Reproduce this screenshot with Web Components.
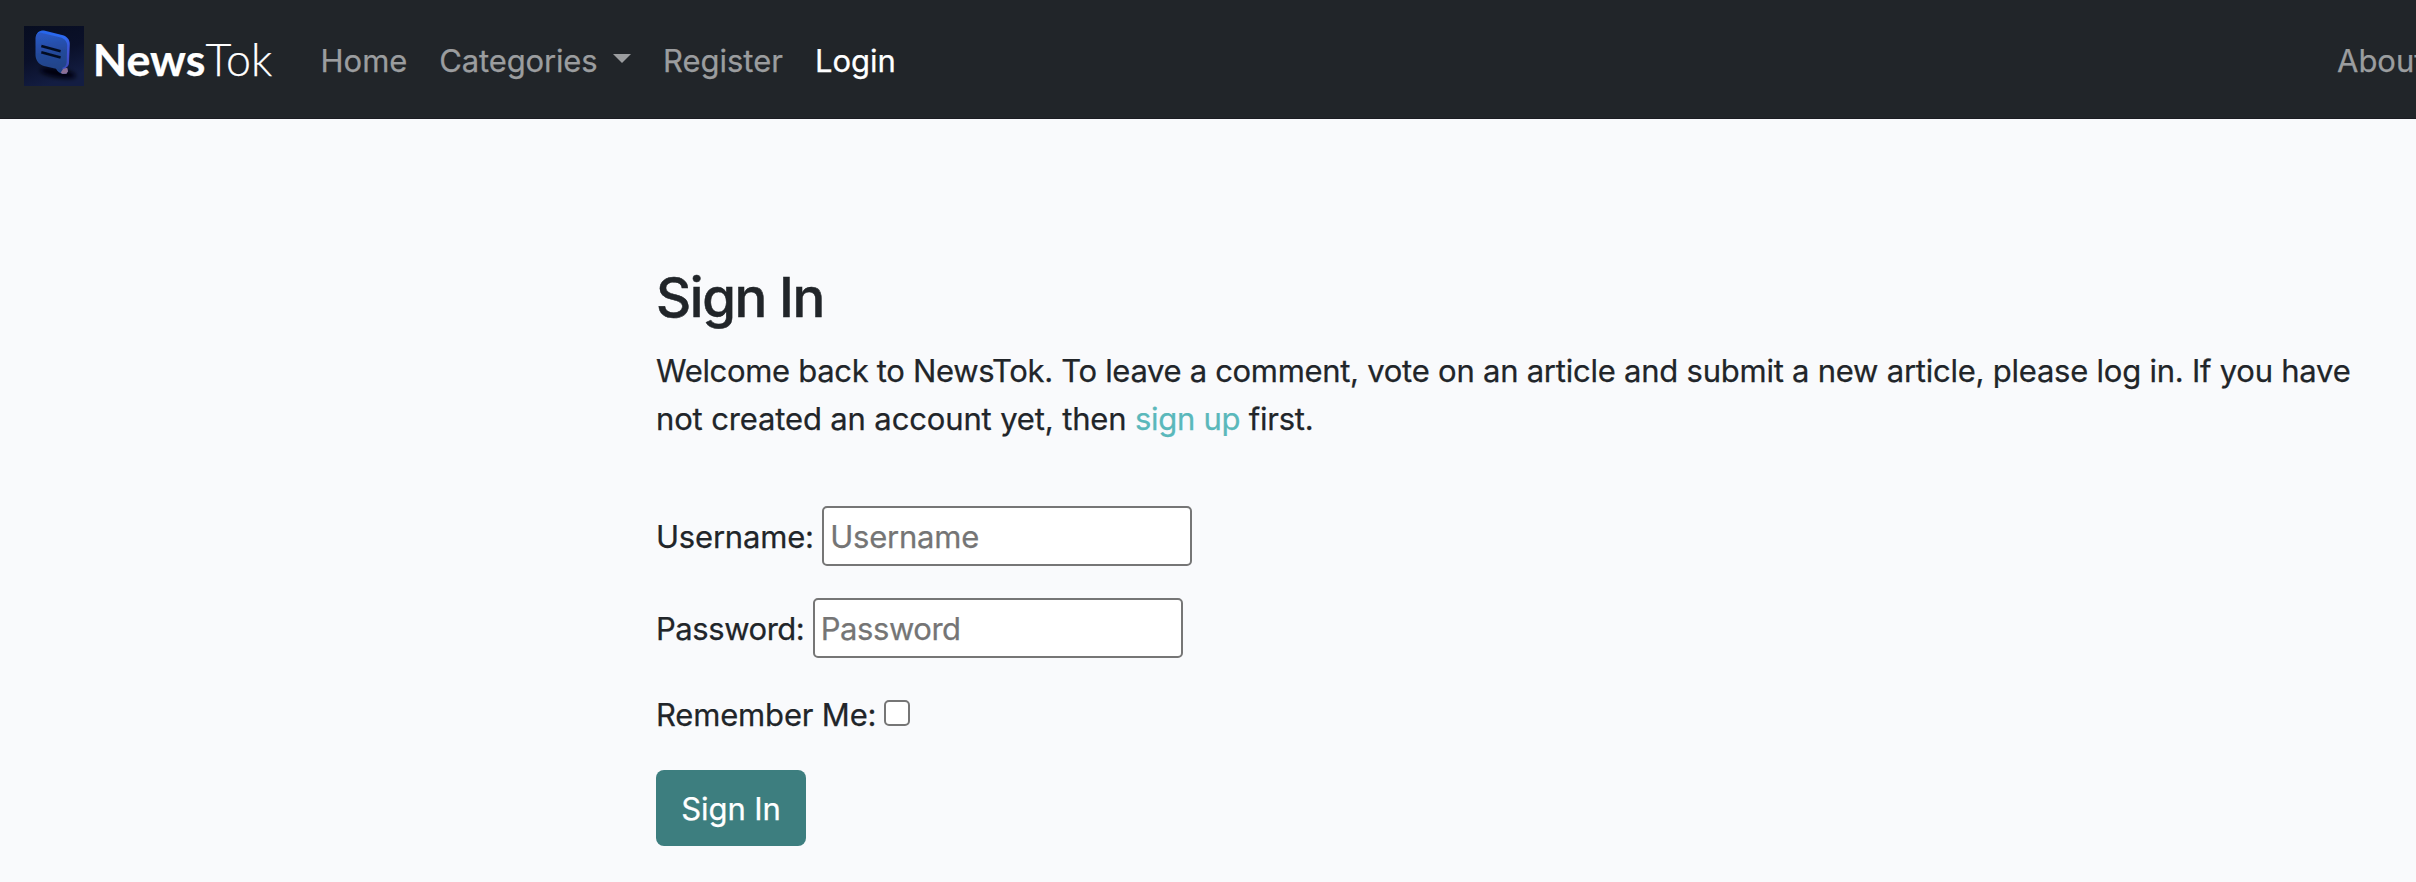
<!DOCTYPE html>
<html lang="en">
<head>
<meta charset="utf-8">
<title>NewsTok - Sign In</title>
<style>
html,body{margin:0;padding:0}
body{background:#f9fafc;color:#212529;font:400 31px/48px Inter,"Liberation Sans",sans-serif;-webkit-text-stroke:.25px;overflow:hidden;height:882px}
</style>
</head>
<body>
<nt-app></nt-app>
<script>
const define=(name,html,setup)=>{
  const tpl=document.createElement('template');
  tpl.innerHTML=html;
  customElements.define(name,class extends HTMLElement{
    constructor(){super();this.attachShadow({mode:'open'}).append(tpl.content.cloneNode(true));}
    connectedCallback(){if(setup)setup(this,this.shadowRoot);}
  });
};

define('nt-logo',`<style>:host{display:block;width:60px;height:60px;flex:none}svg{display:block}</style>
<svg width="60" height="60" viewBox="0 0 60 60">
<defs>
<linearGradient id="bg" x1="0" y1="0" x2=".35" y2="1"><stop offset="0" stop-color="#070d20"/><stop offset=".55" stop-color="#0a1029"/><stop offset="1" stop-color="#131d42"/></linearGradient>
<linearGradient id="face" x1=".4" y1="0" x2=".5" y2="1"><stop offset="0" stop-color="#2a58c4"/><stop offset=".5" stop-color="#24499a"/><stop offset="1" stop-color="#1f4283"/></linearGradient>
<linearGradient id="side" x1="0" y1="0" x2="1" y2=".9"><stop offset="0" stop-color="#2464ea"/><stop offset=".55" stop-color="#2e6af2"/><stop offset=".8" stop-color="#4150d0"/><stop offset="1" stop-color="#3446aa"/></linearGradient>
<filter id="soft" x="-50%" y="-50%" width="200%" height="200%"><feGaussianBlur stdDeviation="2.2"/></filter>
<filter id="edge"><feGaussianBlur stdDeviation=".35"/></filter>
</defs>
<rect width="60" height="60" fill="url(#bg)"/>
<ellipse cx="34" cy="47" rx="18" ry="4.5" transform="rotate(10 34 47)" fill="#03050f" filter="url(#soft)"/>
<g filter="url(#edge)">
<path d="M12 12C12 7 15 4.5 20 4.6L39 9.3C43 10.6 45.8 13.5 45.8 18L45 37C44.8 39.5 43.5 41 42 41.6L43.8 44L42.8 47.6L38.5 48Z" fill="url(#side)"/>
<path d="M11.5 13C11.5 8.5 14 6.3 18 7L36 11.3C40.5 12.5 43.2 15.5 43.2 19.5L42.7 36C42.6 39 41 41.5 38 42L41.5 45.5L38.5 47.8C36 47.5 33.5 45.5 32 42.8L20 40C14.5 38.5 11.6 34 11.5 29Z" fill="url(#face)"/>
<path d="M39 43L43.3 41.8L44 45.6L42.3 47.8L38 47.8L36.8 46.4Z" fill="#8c6f94"/>
<path d="M17.3 20L36.6 25.3M17.3 26.3L36.6 31.6" stroke="#060c24" stroke-width="2.6"/>
</g>
</svg>`);

define('nt-brand',`<style>:host{display:flex;align-items:center;gap:8.65px;width:296.5px;flex:none;color:#fff;font:300 44.8px/54px Lato,sans-serif}
nt-logo{margin-top:-6px}b{font-weight:700}.t{letter-spacing:.1px}</style>
<nt-logo></nt-logo><span><b>News</b><span class="t">Tok</span></span>`);

define('nt-link',`<style>:host{display:flex;align-items:center;color:#9b9d9f;padding-top:3px;white-space:nowrap}
:host([active]){color:#fff}
i{display:none}
:host([dropdown]) i{display:block;border:9px solid transparent;border-top-color:currentColor;border-bottom:0;margin:-5px 0 0 15.5px}</style>
<slot></slot><i></i>`);

define('nt-navbar',`<style>:host{display:flex;align-items:center;height:118px;box-sizing:content-box;border-bottom:1px solid #1b1c22;background:#212529;padding-left:24px;overflow:hidden}
nav{display:flex;gap:32px;flex:1}
.end{flex:none;width:79px}</style>
<nt-brand></nt-brand>
<nav><nt-link>Home</nt-link><nt-link dropdown style="letter-spacing:-.16px">Categories</nt-link><nt-link>Register</nt-link><nt-link active>Login</nt-link></nav>
<nt-link class="end">About</nt-link>`);

define('nt-field',`<style>:host{display:flex;align-items:center;height:60px}
label{padding-top:1px}
input{box-sizing:border-box;width:370px;height:60px;margin:0 0 0 8.4px;padding:1px 6px;border:2px solid #767676;border-radius:5px;background:#fff;font:inherit;letter-spacing:inherit;outline:0}
input::placeholder{color:#757575;opacity:1}</style>
<label><slot></slot></label><input>`,(host,root)=>{
  const input=root.querySelector('input');
  input.placeholder=host.getAttribute('placeholder')||'';
  input.type=host.getAttribute('type')||'text';
});

define('nt-check',`<style>:host{display:flex;align-items:center;height:48px;letter-spacing:-.17px}
label{padding-top:3px}
input{appearance:none;box-sizing:border-box;width:26px;height:26px;margin:-1px 0 0 8px;border:2px solid #767676;border-radius:5px;background:#fff}</style>
<label><slot></slot></label><input type="checkbox">`);

define('nt-button',`<style>:host{display:block}
button{display:block;width:150px;height:76px;margin:0;padding:1px 0 0;border:0;border-radius:8px;background:#3d7e7f;color:#fff;font:inherit;letter-spacing:-.08px;-webkit-text-stroke:.25px}</style>
<button><slot></slot></button>`);

define('nt-signin',`<style>:host{display:block;padding:144px 0 0 656px}
h1{margin:0 0 16px;font-weight:500;font-size:54.5px;line-height:68px;letter-spacing:-1.4px;-webkit-text-stroke:.5px}
p{margin:0 0 63px;white-space:nowrap}
.l1{letter-spacing:-.32px}.l1b{letter-spacing:-.235px}.l2{letter-spacing:-.14px}
a{color:#5ab8bb;text-decoration:none;letter-spacing:-.28px}
.f{letter-spacing:-.25px}
nt-field{margin-bottom:32px}
nt-check{margin:-1px 0 33px}</style>
<h1>Sign In</h1>
<p><span class="l1">Welcome back to NewsTok. To leave a comment,</span><span class="l1b"> vote on an article and submit a new article, please log in. If you have</span><br><span class="l2">not created an account yet, then </span><a>sign up</a><span class="f"> first.</span></p>
<nt-field placeholder="Username" style="letter-spacing:-.2px">Username:</nt-field>
<nt-field placeholder="Password" type="password" style="letter-spacing:-.45px">Password:</nt-field>
<nt-check>Remember Me:</nt-check>
<nt-button>Sign In</nt-button>`);

define('nt-app',`<style>:host{display:block}</style><nt-navbar></nt-navbar><nt-signin></nt-signin>`);
</script>
</body>
</html>
